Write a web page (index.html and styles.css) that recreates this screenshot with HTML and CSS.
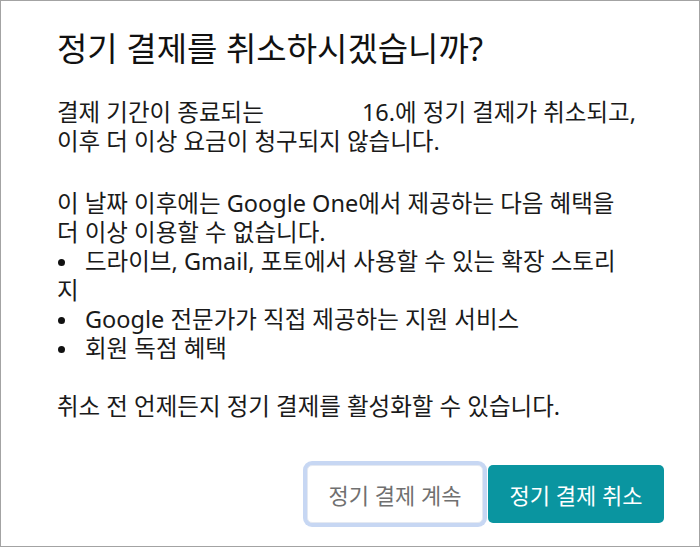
FILE: index.html
```html
<!DOCTYPE html>
<html lang="ko">
<head>
  <meta charset="UTF-8">
  <title>정기 결제 취소</title>
  <link rel="stylesheet" href="styles.css">
</head>
<body>

  <div class="dialog">
    <h1 class="title">정기 결제를 취소하시겠습니까?</h1>

    <div class="content">
      <p class="intro">결제 기간이 종료되는 <span class="date"></span>16.에 정기 결제가 취소되고,<br>
        이후 더 이상 요금이 청구되지 않습니다.</p>

      <p>이 날짜 이후에는 Google One에서 제공하는 다음 혜택을<br>
        더 이상 이용할 수 없습니다.<br>
        <span class="bullet"></span>드라이브, Gmail, 포토에서 사용할 수 있는 확장 스토리<br>
        지<br>
        <span class="bullet"></span>Google 전문가가 직접 제공하는 지원 서비스<br>
        <span class="bullet"></span>회원 독점 혜택</p>

      <p>취소 전 언제든지 정기 결제를 활성화할 수 있습니다.</p>
    </div>

    <div class="actions">
      <button class="btn btn-keep">정기 결제 계속</button>
      <button class="btn btn-cancel">정기 결제 취소</button>
    </div>
  </div>

</body>
</html>
```

FILE: styles.css
```css
html, body {
  margin: 0;
  height: 100%;
}

body {
  font-family: "Noto Sans", "Noto Sans CJK KR", sans-serif;
  color: #1a1a1a;
  background: #fff;
}

.dialog {
  box-sizing: border-box;
  height: 547px;
  border: 1px solid #a3a3a3;
  padding: 29px 35px 0 56px;
  display: flex;
  flex-direction: column;
}

.title {
  margin: 0;
  font-size: 33px;
  font-weight: normal;
  line-height: 38px;
  color: #111;
}

.content {
  margin-top: 30px;
  font-size: 23.5px;
  line-height: 29px;
}

.content p {
  margin: 0 0 29px;
}

.content .intro {
  margin-bottom: 33px;
}

.date {
  display: inline-block;
  width: 92px;
}

.bullet {
  display: inline-block;
  width: 28px;
  vertical-align: middle;
}

.bullet::before {
  content: "";
  display: block;
  width: 7px;
  height: 7px;
  margin: -2px 0 0 1px;
  border-radius: 50%;
  background: #111;
}

.actions {
  display: flex;
  justify-content: flex-end;
  gap: 5px;
  margin-top: auto;
  margin-bottom: 23px;
}

.btn {
  height: 58px;
  width: 176px;
  border-radius: 5px;
  font-family: inherit;
  font-size: 22px;
  cursor: pointer;
}

.btn-keep {
  background: #fff;
  color: #707070;
  border: 1px solid #e4e9f2;
  box-shadow: 0 0 0 4px #c7d7f3;
}

.btn-cancel {
  background: #0a95a0;
  color: #fff;
  border: none;
}

.btn-cancel:hover {
  background: #08858f;
}
```
